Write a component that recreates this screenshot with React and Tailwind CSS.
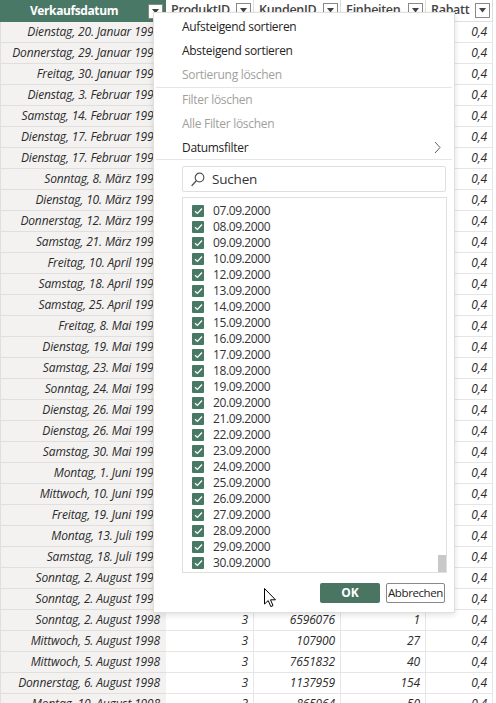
import React from "react";

const rows = [
  ["Dienstag, 20. Januar 1998", "3", "1021954", "20", "0,4"],
  ["Donnerstag, 29. Januar 1998", "3", "5503918", "12", "0,4"],
  ["Freitag, 30. Januar 1998", "3", "3126530", "35", "0,4"],
  ["Dienstag, 3. Februar 1998", "3", "880341", "8", "0,4"],
  ["Samstag, 14. Februar 1998", "3", "4417269", "60", "0,4"],
  ["Dienstag, 17. Februar 1998", "3", "2265807", "14", "0,4"],
  ["Dienstag, 17. Februar 1998", "3", "7013452", "22", "0,4"],
  ["Sonntag, 8. März 1998", "3", "954112", "5", "0,4"],
  ["Dienstag, 10. März 1998", "3", "6120474", "31", "0,4"],
  ["Donnerstag, 12. März 1998", "3", "1874305", "48", "0,4"],
  ["Samstag, 21. März 1998", "3", "3390716", "16", "0,4"],
  ["Freitag, 10. April 1998", "3", "5642081", "9", "0,4"],
  ["Samstag, 18. April 1998", "3", "2047653", "73", "0,4"],
  ["Samstag, 25. April 1998", "3", "791528", "25", "0,4"],
  ["Freitag, 8. Mai 1998", "3", "4830961", "11", "0,4"],
  ["Dienstag, 19. Mai 1998", "3", "6257730", "40", "0,4"],
  ["Samstag, 23. Mai 1998", "3", "1513849", "3", "0,4"],
  ["Sonntag, 24. Mai 1998", "3", "3978204", "19", "0,4"],
  ["Dienstag, 26. Mai 1998", "3", "7406315", "27", "0,4"],
  ["Dienstag, 26. Mai 1998", "3", "2689470", "64", "0,4"],
  ["Samstag, 30. Mai 1998", "3", "5130826", "7", "0,4"],
  ["Montag, 1. Juni 1998", "3", "906483", "38", "0,4"],
  ["Mittwoch, 10. Juni 1998", "3", "4468127", "15", "0,4"],
  ["Freitag, 19. Juni 1998", "3", "1725094", "52", "0,4"],
  ["Montag, 13. Juli 1998", "3", "6834519", "29", "0,4"],
  ["Samstag, 18. Juli 1998", "3", "3051768", "44", "0,4"],
  ["Sonntag, 2. August 1998", "3", "2416953", "6", "0,4"],
  ["Sonntag, 2. August 1998", "3", "5987302", "18", "0,4"],
  ["Sonntag, 2. August 1998", "3", "6596076", "1", "0,4"],
  ["Mittwoch, 5. August 1998", "3", "107900", "27", "0,4"],
  ["Mittwoch, 5. August 1998", "3", "7651832", "40", "0,4"],
  ["Donnerstag, 6. August 1998", "3", "1137959", "154", "0,4"],
  ["Montag, 10. August 1998", "3", "865964", "50", "0,4"],
];

const dates = [
  "07.09.2000", "08.09.2000", "09.09.2000", "10.09.2000", "12.09.2000",
  "13.09.2000", "14.09.2000", "15.09.2000", "16.09.2000", "17.09.2000",
  "18.09.2000", "19.09.2000", "20.09.2000", "21.09.2000", "22.09.2000",
  "23.09.2000", "24.09.2000", "25.09.2000", "26.09.2000", "27.09.2000",
  "28.09.2000", "29.09.2000", "30.09.2000",
];

function DropBtn() {
  return (
    <div className="flex h-[15px] w-[15px] shrink-0 items-center justify-center border border-[#8a8886] bg-white">
      <svg width="7" height="5" viewBox="0 0 7 5">
        <path d="M0 0 L7 0 L3.5 4.5 Z" fill="#444" />
      </svg>
    </div>
  );
}

function Check() {
  return (
    <div className="flex h-[12px] w-[12px] shrink-0 items-center justify-center rounded-[1px] bg-[#4a7866]">
      <svg width="9" height="8" viewBox="0 0 9 8">
        <path d="M1 4.2 L3.4 6.5 L8 1.5" fill="none" stroke="#fff" strokeWidth="1.2" />
      </svg>
    </div>
  );
}

export default function App() {
  const cellCls = "flex items-center justify-end pr-[5px] border-r border-b border-[#e6e6e6]";
  return (
    <div className="relative h-[703px] w-[496px] overflow-hidden bg-white font-['Open_Sans','Noto_Sans',sans-serif] text-[#333]">
      {/* Header */}
      <div className="flex h-[22px]">
        <div className="flex w-[166px] items-center bg-[#4a7866] pr-[3px]">
          <div className="flex-1 text-center text-[12px] font-bold tracking-[-0.4px] text-white">Verkaufsdatum</div>
          <DropBtn />
        </div>
        {[
          ["ProduktID", "w-[88px]"],
          ["KundenID", "w-[87px]"],
          ["Einheiten", "w-[85px]"],
          ["Rabatt", "w-[67px]"],
        ].map(([t, w]) => (
          <div key={t} className={`flex ${w} items-center justify-between border-r border-b border-[#e1dfdd] pl-[5px] pr-[2px]`}>
            <span className="text-[12.5px] font-semibold tracking-[-0.3px] text-[#444]">{t}</span>
            <DropBtn />
          </div>
        ))}
        <div className="flex-1" />
      </div>

      {/* Rows */}
      {rows.map((r, i) => (
        <div key={i} className="flex h-[21px] text-[12px] italic tracking-[-0.15px] text-[#2b2b2b]">
          <div className="flex w-[166px] items-center justify-end whitespace-nowrap border-b border-l border-[#e1dfdd] bg-[#f3f2f1] pr-[6px]">
            {r[0]}
          </div>
          <div className={`${cellCls} w-[88px]`}>{r[1]}</div>
          <div className={`${cellCls} w-[87px]`}>{r[2]}</div>
          <div className={`${cellCls} w-[85px]`}>{r[3]}</div>
          <div className={`${cellCls} w-[67px]`}>{r[4]}</div>
          <div className="flex-1" />
        </div>
      ))}

      {/* Popup */}
      <div className="absolute left-[153px] top-[12px] flex h-[601px] w-[302px] flex-col border border-[#e1dfdd] bg-white pt-[2px] text-[12px] tracking-[-0.3px] text-[#252423] shadow-[0_2px_6px_rgba(0,0,0,0.12)]">
        <div className="flex h-[24px] items-center pl-[28px]">Aufsteigend sortieren</div>
        <div className="flex h-[24px] items-center pl-[28px]">Absteigend sortieren</div>
        <div className="flex h-[24px] items-center pl-[28px] text-[#a19f9d]">Sortierung löschen</div>
        <div className="mx-[2px] h-px bg-[#e6e6e6]" />
        <div className="flex h-[24px] items-center pl-[28px] text-[#a19f9d]">Filter löschen</div>
        <div className="flex h-[24px] items-center pl-[28px] text-[#a19f9d]">Alle Filter löschen</div>
        <div className="flex h-[23px] items-center justify-between pl-[28px] pr-[13px]">
          <span>Datumsfilter</span>
          <svg width="7" height="13" viewBox="0 0 7 13">
            <path d="M1 1 L6 6.5 L1 12" fill="none" stroke="#605e5c" strokeWidth="1" />
          </svg>
        </div>
        <div className="mx-[2px] h-px bg-[#e6e6e6]" />

        {/* Search */}
        <div className="ml-[28px] mt-[6px] flex h-[26px] w-[264px] items-center rounded-[2px] border border-[#e1dfdd] pl-[8px]">
          <svg width="14" height="15" viewBox="0 0 14 15">
            <circle cx="8.5" cy="5.5" r="4.3" fill="none" stroke="#555" strokeWidth="1.2" />
            <path d="M5.3 8.7 L1 13.5" stroke="#555" strokeWidth="1.3" strokeLinecap="round" />
          </svg>
          <span className="ml-[7px] text-[13.5px] tracking-[-0.2px] text-[#333]">Suchen</span>
        </div>

        {/* List */}
        <div className="relative ml-[28px] mt-[5px] h-[376px] w-[265px] overflow-hidden border border-[#e1dfdd] pt-[5px]">
          {dates.map((d) => (
            <div key={d} className="flex h-[16px] items-center pl-[9px] text-[12px] tracking-[-0.4px] text-[#333]">
              <Check />
              <span className="ml-[9px]">{d}</span>
            </div>
          ))}
          <div className="absolute right-0 top-[357px] h-[17px] w-[8px] bg-[#c8c8c8]" />
        </div>

        {/* Buttons */}
        <div className="mt-[10px] flex justify-end gap-[6px] pr-[9px]">
          <div className="flex h-[20px] w-[60px] items-center justify-center rounded-[2px] bg-[#4a7563] text-[12px] font-bold tracking-normal text-white">
            OK
          </div>
          <div className="flex h-[20px] w-[59px] items-center justify-center rounded-[2px] border border-[#8a8886] bg-white text-[11.5px] tracking-[-0.4px] text-[#252423]">
            Abbrechen
          </div>
        </div>
      </div>

      {/* Cursor */}
      <svg className="absolute left-[264px] top-[588px]" width="14" height="21" viewBox="0 0 14 21">
        <path d="M0.5 0.5 L0.5 16 L4.2 12.6 L6.8 18.6 L9 17.6 L6.5 11.8 L11.5 11.8 Z" fill="#fff" stroke="#000" strokeWidth="1" strokeLinejoin="round" />
      </svg>
    </div>
  );
}
